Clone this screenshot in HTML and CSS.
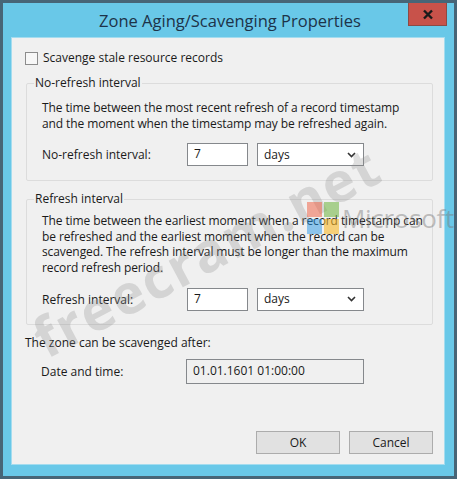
FILE: index.html
```html
<!DOCTYPE html>
<html lang="en">

<head>
  <meta charset="UTF-8" />
  <title>Zone Aging/Scavenging Properties</title>
  <link rel="stylesheet" href="styles.css">
</head>

<body>
  <div class="window">
    <div class="titlebar">
      <span class="title">Zone Aging/Scavenging Properties</span>
      <button class="close">
        <svg width="12" height="11" viewBox="0 0 12 11">
          <path d="M2 1.5 L10 9.5 M10 1.5 L2 9.5" stroke="#1a1a1a" stroke-width="2.4" fill="none" />
        </svg>
      </button>
    </div>

    <div class="client">
      <label class="check-row">
        <span class="checkbox"></span>
        Scavenge stale resource records
      </label>

      <fieldset class="group group-first">
        <legend>No-refresh interval</legend>
        <p class="desc">The time between the most recent refresh of a record timestamp and the moment when the timestamp may be refreshed again.</p>
        <div class="row">
          <span class="row-label">No-refresh interval:</span>
          <span class="field num">7</span>
          <span class="field select">days
            <svg width="9" height="6" viewBox="0 0 9 6"><path d="M1 1 L4.5 4.5 L8 1" stroke="#333" stroke-width="1.6" fill="none" /></svg>
          </span>
        </div>
      </fieldset>

      <fieldset class="group group-second">
        <legend>Refresh interval</legend>
        <p class="desc">The time between the earliest moment when a record timestamp can be refreshed and the earliest moment when the record can be scavenged. The refresh interval must be longer than the maximum record refresh period.</p>
        <div class="row">
          <span class="row-label">Refresh interval:</span>
          <span class="field num">7</span>
          <span class="field select">days
            <svg width="9" height="6" viewBox="0 0 9 6"><path d="M1 1 L4.5 4.5 L8 1" stroke="#333" stroke-width="1.6" fill="none" /></svg>
          </span>
        </div>
      </fieldset>

      <p class="after">The zone can be scavenged after:</p>
      <div class="row date-row">
        <span class="row-label">Date and time:</span>
        <span class="field readonly">01.01.1601 01:00:00</span>
      </div>

      <div class="buttons">
        <button class="btn">OK</button>
        <button class="btn">Cancel</button>
      </div>
    </div>

    <!-- watermark from the source screenshot -->
    <div class="wm-text">freecram.net</div>
    <div class="wm-logo">
      <div class="squares">
        <span class="sq red"></span>
        <span class="sq green"></span>
        <span class="sq blue"></span>
        <span class="sq yellow"></span>
      </div>
      <span class="wm-word">Microsoft</span>
    </div>
  </div>
</body>

</html>
```

FILE: styles.css
```css
* {
  margin: 0px;
  padding: 0px;
  box-sizing: border-box;
}

body {
  font-family: "Open Sans", "Noto Sans", sans-serif;
  font-size: 12px;
  color: #1a1a1a;
  overflow: hidden;
}

.window {
  position: relative;
  width: 457px;
  height: 479px;
  border: 3px solid #476577;
  background-color: #69c8e8;
  padding: 0 9px 11px 8px;
  overflow: hidden;
}

.titlebar {
  height: 34px;
  display: flex;
  align-items: center;
  justify-content: center;
}

.title {
  font-size: 16.5px;
  color: #1d3349;
  margin-left: 4px;
}

.close {
  position: absolute;
  top: -1px;
  right: 7px;
  width: 39px;
  height: 24px;
  background-color: #c8524a;
  border: 1px solid #8d4a44;
  display: flex;
  align-items: center;
  justify-content: center;
}

.client {
  height: 428px;
  background-color: #f0f0f0;
  border: 1px solid #a4dcef;
  padding: 12px 11px 0 13px;
}

.check-row {
  display: flex;
  align-items: center;
  gap: 5px;
  height: 16px;
  line-height: 16px;
}

.checkbox {
  width: 13px;
  height: 13px;
  border: 1px solid #8c8c8c;
  background-color: #f7f7f7;
}

.group {
  border: 1px solid #dcdcdc;
  border-radius: 2px;
  padding: 0 3px 14px 15px;
  margin-left: 1px;
}

.group legend {
  margin-left: -8px;
  padding: 0 1px;
  line-height: 16px;
}

.group-first {
  margin-top: 9px;
  padding-right: 14px;
}

.group-first .desc {
  margin-top: 9px;
}

.group-second {
  margin-top: 10px;
  padding-bottom: 13px;
}

.group-second .desc {
  margin-top: 6px;
}

.desc {
  line-height: 15.6px;
  letter-spacing: -0.1px;
  margin-bottom: 12px;
}

.row {
  display: flex;
  align-items: center;
  height: 23px;
}

.row-label {
  width: 145px;
}

.field {
  height: 23px;
  border: 1px solid #85888c;
  background-color: #ffffff;
  padding-left: 6px;
  line-height: 20px;
}

.num {
  width: 61px;
  margin-right: 9px;
}

.select {
  width: 107px;
  display: flex;
  align-items: center;
  justify-content: space-between;
  padding-right: 7px;
}

.after {
  margin-top: 10px;
  line-height: 16px;
}

.date-row {
  margin-top: 8px;
  height: 25px;
  padding-left: 16px;
}

.readonly {
  width: 178px;
  height: 25px;
  background-color: #f0f0f0;
  line-height: 21px;
}

.buttons {
  display: flex;
  justify-content: flex-end;
  gap: 9px;
  margin-top: 47px;
}

.btn {
  width: 84px;
  height: 23px;
  background-color: #e1e1e1;
  border: 1px solid #acacac;
  font-family: inherit;
  font-size: 12px;
  color: #1a1a1a;
}

.wm-text {
  position: absolute;
  left: 34px;
  top: 300px;
  font-size: 55px;
  line-height: 76px;
  letter-spacing: 2px;
  font-weight: bold;
  color: rgba(140, 140, 140, 0.28);
  transform: rotate(-28deg);
  transform-origin: left center;
  white-space: nowrap;
}

.wm-logo {
  position: absolute;
  left: 304px;
  top: 199px;
  display: flex;
  align-items: center;
  gap: 3px;
}

.squares {
  display: grid;
  grid-template-columns: 15px 15px;
  gap: 2px;
}

.sq {
  width: 15px;
  height: 15px;
}

.red { background-color: rgba(240, 90, 60, 0.5); }
.green { background-color: rgba(110, 180, 60, 0.55); }
.blue { background-color: rgba(40, 150, 230, 0.5); }
.yellow { background-color: rgba(250, 185, 40, 0.6); }

.wm-word {
  font-size: 26px;
  line-height: 32px;
  letter-spacing: -0.3px;
  color: rgba(120, 120, 120, 0.45);
}
```
